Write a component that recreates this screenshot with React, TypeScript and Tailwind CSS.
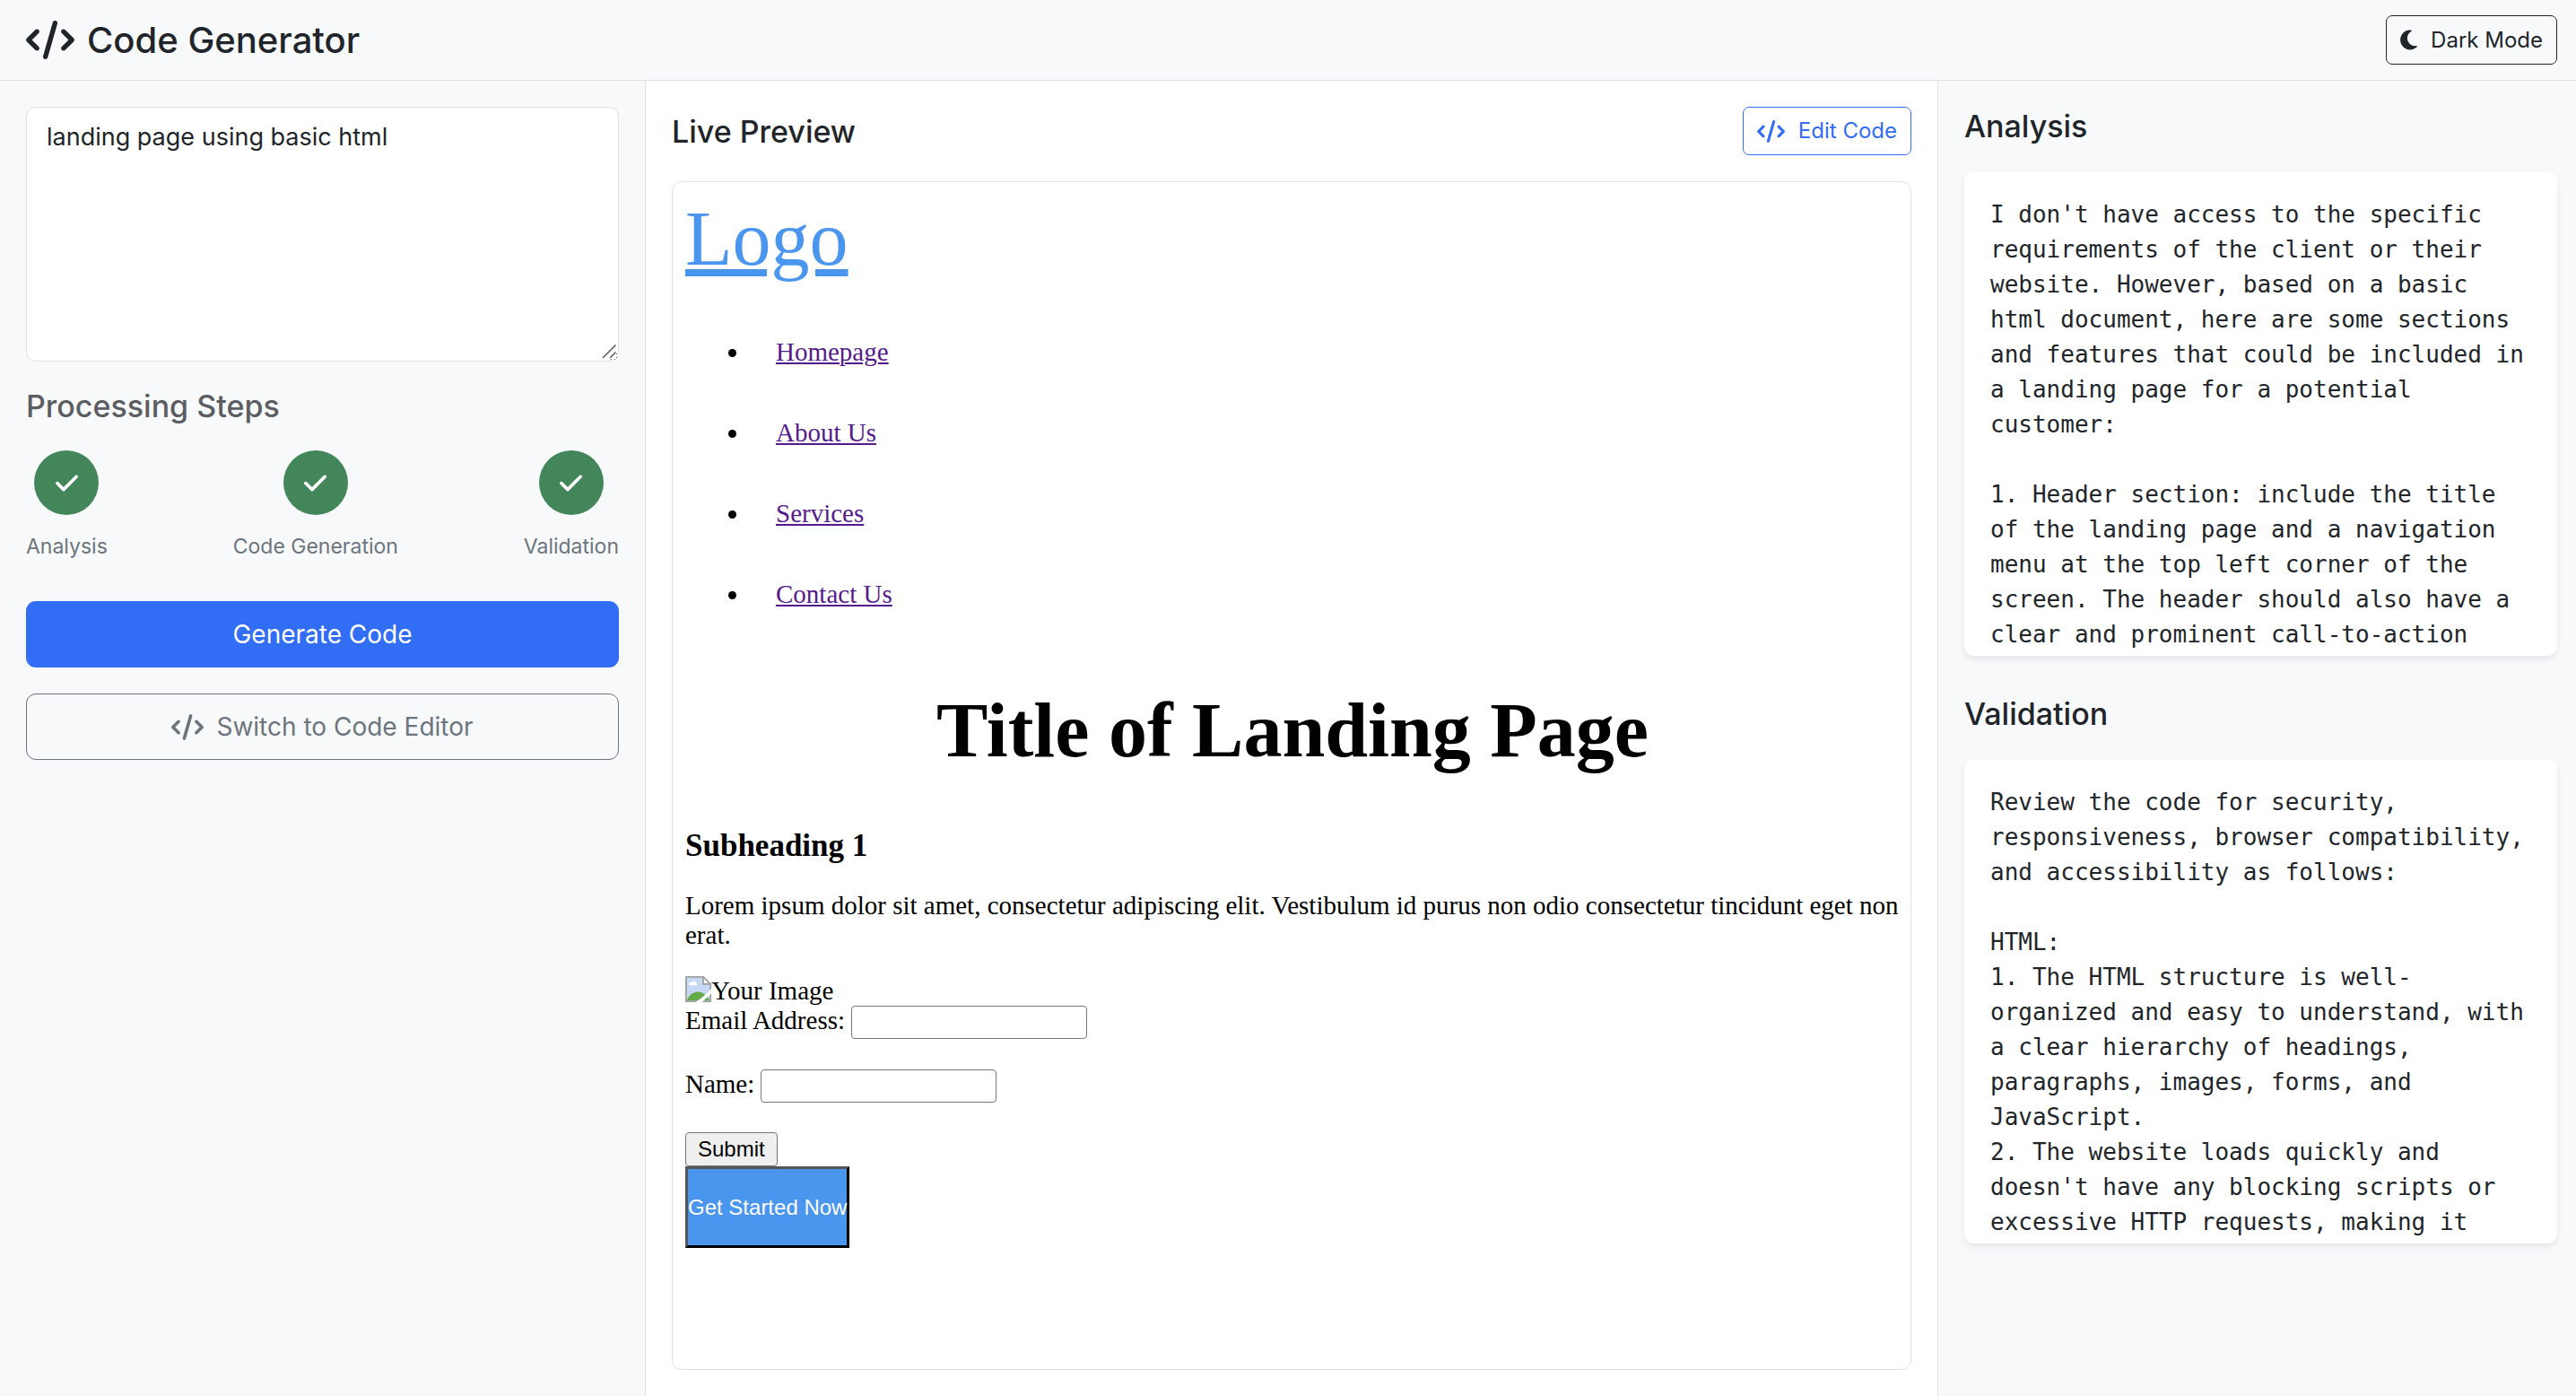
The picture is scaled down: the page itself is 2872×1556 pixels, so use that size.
import { useState } from "react";
import type { ReactNode } from "react";
import { FaCheck, FaCode, FaMoon } from "react-icons/fa6";

const steps = ["Analysis", "Code Generation", "Validation"];
const links = ["Homepage", "About Us", "Services", "Contact Us"];

const analysis = `I don't have access to the specific requirements of the client or their website. However, based on a basic html document, here are some sections and features that could be included in a landing page for a potential customer:

1. Header section: include the title of the landing page and a navigation menu at the top left corner of the screen. The header should also have a clear and prominent call-to-action`;

const validation = `Review the code for security, responsiveness, browser compatibility, and accessibility as follows:

HTML:
1. The HTML structure is well-organized and easy to understand, with a clear hierarchy of headings, paragraphs, images, forms, and JavaScript.
2. The website loads quickly and doesn't have any blocking scripts or excessive HTTP requests, making it`;

function ResultPanel({ title, children }: { title: string; children: ReactNode }) {
  return (
    <section>
      <h2 className="text-[34px] leading-[43px] font-medium">{title}</h2>
      <div className="mt-[29px] h-[540px] overflow-hidden rounded-[11px] bg-white p-[29px] shadow-[0_4px_7px_rgba(0,0,0,0.075)]">
        <pre className="font-['DejaVu_Sans_Mono',monospace] text-[26px] leading-[39px] whitespace-pre-wrap">
          {children}
        </pre>
      </div>
    </section>
  );
}

function BrokenImage() {
  return (
    <svg viewBox="0 0 16 16" className="size-[29px] shrink-0" role="img" aria-label="Your Image">
      <path d="M.5.5h10.8l4.2 4.2v10.8H.5z" fill="#c6d8f6" />
      <path d="M2.4 5.4c-.7-1.500 1.100-2.200 1.700-1.400.6-1.600 2.600-1 2.500.4 1.200 0 1 1.300.3 1.300H2.600z" fill="#fff" />
      <path d="M1 15c1.200-3.300 3.700-5.300 6.700-5.300s5.600 2 7.300 5.300z" fill="#62ab46" />
      <path d="M11 .5v4.300h4.500z" fill="#fff" />
      <path d="M.5.5h10.600l4.400 4.400v10.600H.5zM11 .8v4.100h4.200" fill="none" stroke="#a0a0a0" />
      <path d="M16 7.800v3L10.300 16H6.500l5-3.800z" fill="#fff" />
    </svg>
  );
}

function Preview() {
  return (
    <div className="mt-[29px] flex-1 overflow-hidden rounded-[11px] border border-[#dee2e6] bg-white pt-[14px] pr-[12px] pl-[14px] font-['Liberation_Serif',serif] text-[29px] leading-[33px] text-black">
      <a
        href="#logo"
        className="block w-fit text-[86px] leading-[99px] text-[#4a95ee] underline decoration-8 underline-offset-[5px]"
      >
        Logo
      </a>
      <ul className="mt-[31px] list-disc pl-[72px]">
        {links.map((link) => (
          <li key={link} className="px-[29px] pt-[29px] pb-[28px]">
            <a href="#preview" className="text-[#551a8b] underline decoration-2 underline-offset-2">
              {link}
            </a>
          </li>
        ))}
      </ul>
      <h1 className="mt-[58px] text-center text-[86px] leading-[99px] font-bold">Title of Landing Page</h1>
      <h3 className="mt-[60px] text-[35px] leading-[38px] font-bold">Subheading 1</h3>
      <p className="mt-[31px]">
        Lorem ipsum dolor sit amet, consectetur adipiscing elit. Vestibulum id purus non odio consectetur tincidunt eget
        non erat.
      </p>
      <div className="mt-[29px] flex h-[33px]">
        <BrokenImage />
        <span>Your Image</span>
      </div>
      <form onSubmit={(e) => e.preventDefault()}>
        <div className="flex items-start gap-[7px]">
          <label htmlFor="email">Email Address:</label>
          <input
            id="email"
            type="email"
            className="h-[37px] w-[263px] rounded-[4px] border border-[#767676] bg-white px-1 text-[24px]"
          />
        </div>
        <div className="mt-[34px] flex items-start gap-[7px]">
          <label htmlFor="name">Name:</label>
          <input
            id="name"
            type="text"
            className="h-[37px] w-[263px] rounded-[4px] border border-[#767676] bg-white px-1 text-[24px]"
          />
        </div>
        <button
          type="submit"
          className="mt-[33px] block h-[38px] rounded-[4px] border border-[#767676] bg-[#efefef] px-[13px] font-['Liberation_Sans',sans-serif] text-[24px] leading-[36px]"
        >
          Submit
        </button>
      </form>
      <button className="block h-[91px] w-[183px] border-3 border-t-[#555] border-r-black border-b-black border-l-[#555] bg-[#4a95ee] text-center font-['Liberation_Sans',sans-serif] text-[24px] leading-[27px] whitespace-nowrap text-white">
        Get Started Now
      </button>
    </div>
  );
}

export default function App() {
  const [prompt, setPrompt] = useState("landing page using basic html");
  return (
    <div className="flex h-screen flex-col bg-[#f8f9fb] font-[Inter,sans-serif] text-[#212529]">
      <header className="flex h-[90px] shrink-0 items-center justify-between border-b border-[#dee2e6] pr-[21px] pl-[29px]">
        <h1 className="flex items-center gap-[14px] text-[40px] leading-[52px] font-medium">
          <FaCode className="h-[43px] w-[54px]" />
          Code Generator
        </h1>
        <button className="flex h-[55px] items-center gap-[15px] rounded-[7px] border border-[#212529] px-[15px] text-[24px]">
          <FaMoon className="h-[25px] w-[19px]" />
          Dark Mode
        </button>
      </header>
      <div className="grid min-h-0 flex-1 grid-cols-[720fr_1440fr_712fr]">
        <aside className="flex min-w-0 flex-col border-r border-[#dee2e6] px-[29px] pt-[29px]">
          <div className="relative">
            <textarea
              aria-label="Prompt"
              value={prompt}
              onChange={(e) => setPrompt(e.target.value)}
              className="block h-[284px] w-full resize-y rounded-[11px] border border-[#dee2e6] bg-white px-[22px] py-[11px] text-[27px] leading-[43px]"
            />
            <svg
              viewBox="0 0 16 16"
              className="pointer-events-none absolute right-[3px] bottom-[3px] size-4 bg-white"
              fill="none"
              stroke="#5a5a5a"
              strokeWidth="1.5"
              aria-hidden="true"
            >
              <path d="M1 15L15.500.5M9 15l6.500-6.500" />
            </svg>
          </div>
          <h2 className="mt-[28px] text-[34px] leading-[43px] font-medium text-[#5b5d61]">Processing Steps</h2>
          <ol className="mt-[28px] flex justify-between">
            {steps.map((step) => (
              <li key={step} className="flex flex-col items-center gap-4 text-[23px] leading-[38px] text-[#6c757d]">
                <span className="grid size-[72px] place-items-center rounded-full bg-[#438659] text-white">
                  <FaCheck className="h-[29px] w-[25px]" />
                </span>
                {step}
              </li>
            ))}
          </ol>
          <button className="mt-[42px] h-[74px] rounded-[11px] bg-[#326df5] text-[28px] text-white">Generate Code</button>
          <button className="mt-[29px] flex h-[74px] items-center justify-center gap-[14px] rounded-[11px] border border-[#6c757d] text-[28px] text-[#6c757d]">
            <FaCode className="h-[29px] w-[36px]" />
            Switch to Code Editor
          </button>
        </aside>
        <main className="flex min-w-0 flex-col bg-white px-[29px] pt-[29px] pb-[29px]">
          <div className="flex items-center justify-between">
            <h2 className="text-[34px] leading-[43px] font-medium">Live Preview</h2>
            <button className="flex h-[54px] items-center gap-[15px] rounded-[7px] border border-[#326df5] px-[15px] text-[24px] text-[#326df5]">
              <FaCode className="h-[25px] w-[31px]" />
              Edit Code
            </button>
          </div>
          <Preview />
        </main>
        <aside className="flex min-w-0 flex-col gap-[43px] border-l border-[#dee2e6] pt-[29px] pr-[21px] pl-[29px]">
          <ResultPanel title="Analysis">{analysis}</ResultPanel>
          <ResultPanel title="Validation">{validation}</ResultPanel>
        </aside>
      </div>
    </div>
  );
}
